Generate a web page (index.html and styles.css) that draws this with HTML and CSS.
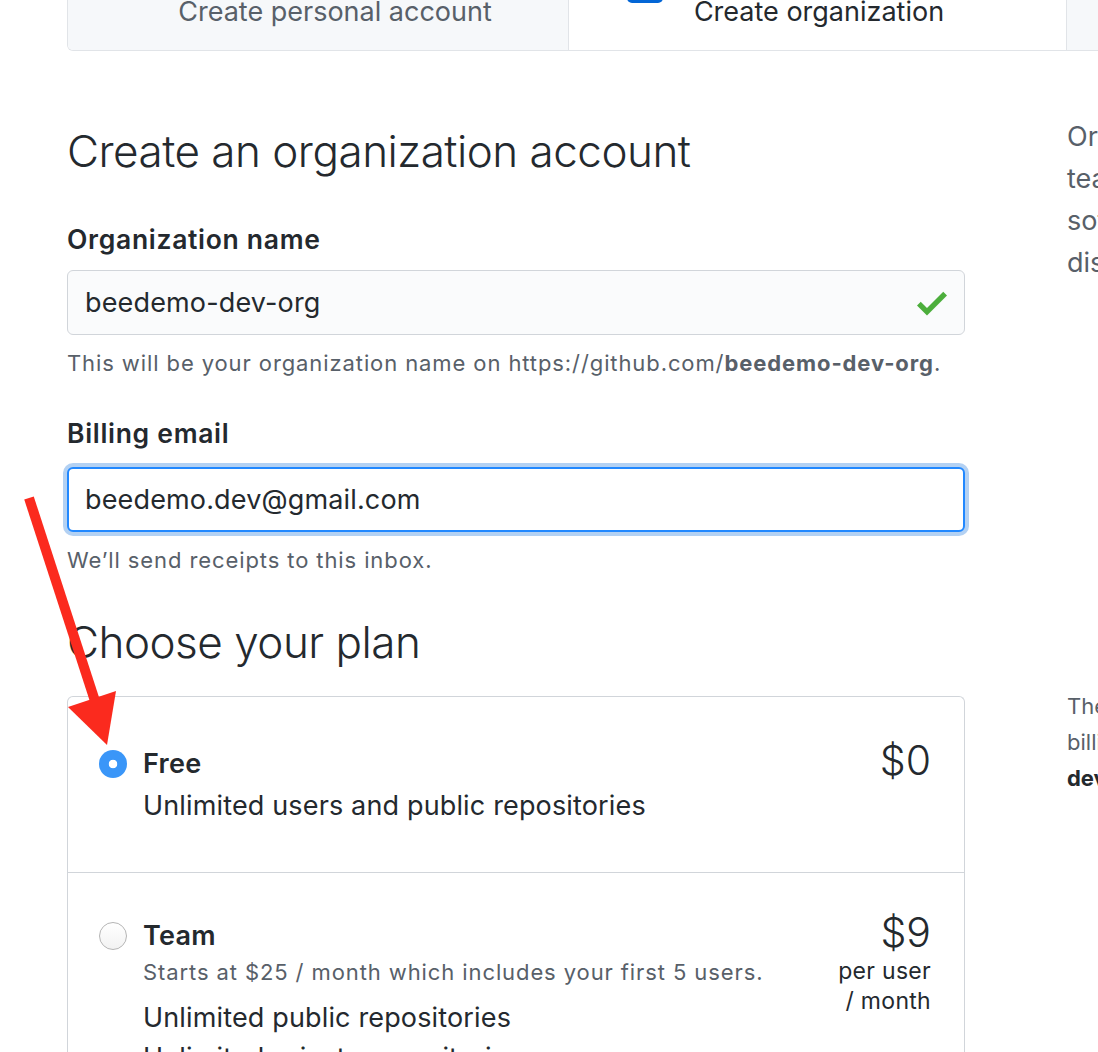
FILE: index.html
```html
<!DOCTYPE html>
<html lang="en">
<head>
<meta charset="utf-8">
<title>Create an organization account</title>
<link rel="stylesheet" href="styles.css">
</head>
<body>
<div class="page">
  <nav class="steps">
    <div class="step step-first">Create personal account</div>
    <div class="step step-active"><span class="step-label"><span class="step-badge"></span>Create organization</span></div>
    <div class="step step-last">Invite members</div>
  </nav>

  <div class="layout">
    <main class="main">
      <h1 class="title">Create an organization account</h1>

      <div class="field">
        <label class="label">Organization name</label>
        <div class="input input-ok">
          <span class="input-value">beedemo-dev-org</span>
          <svg class="check" viewBox="0 0 12 16" width="30" height="40" aria-hidden="true"><path d="M12 5l-8 8-4-4 1.5-1.5L4 10l6.5-6.5L12 5z"/></svg>
        </div>
        <p class="note">This will be your organization name on https://github.com/<strong>beedemo-dev-org</strong>.</p>
      </div>

      <div class="field">
        <label class="label">Billing email</label>
        <div class="input input-focus"><span class="input-value">beedemo.dev@gmail.com</span></div>
        <p class="note">We’ll send receipts to this inbox.</p>
      </div>

      <h2 class="title title-plan">Choose your plan</h2>

      <div class="plans">
        <div class="plan plan-free">
          <span class="radio radio-on"></span>
          <div class="plan-body">
            <div class="plan-name">Free</div>
            <div class="plan-desc">Unlimited users and public repositories</div>
          </div>
          <div class="plan-price"><div class="price">$0</div></div>
        </div>
        <div class="plan plan-team">
          <span class="radio"></span>
          <div class="plan-body">
            <div class="plan-name">Team</div>
            <div class="plan-sub">Starts at $25 / month which includes your first 5 users.</div>
            <div class="plan-desc plan-desc-list">Unlimited public repositories</div>
            <div class="plan-desc plan-desc-list2">Unlimited private repositories</div>
          </div>
          <div class="plan-price">
            <div class="price">$9</div>
            <div class="price-unit">per user<br>/ month</div>
          </div>
        </div>
      </div>
    </main>

    <aside class="side">
      <p class="side-intro"><span>Organizations are shared accounts where</span><span>teams can collaborate across many projects</span><span>software development tools and</span><span>discussions in one place.</span></p>
      <p class="side-billing"><span>The plan you choose can be changed later,</span><span>billing receipts will go to beedemo.</span><strong>dev@gmail.com</strong></p>
    </aside>
  </div>

  <svg class="arrow" width="140" height="260" viewBox="0 0 140 260" aria-hidden="true">
    <line x1="29" y1="2" x2="95" y2="205" stroke="#fb2a1e" stroke-width="10"/>
    <polygon points="68,211 116,195 107,249" fill="#fb2a1e"/>
  </svg>
</div>
</body>
</html>
```

FILE: styles.css
```css
* { box-sizing: border-box; }

html, body {
  margin: 0;
  padding: 0;
  background: #fff;
}

body {
  font-family: Inter, "Liberation Sans", Arial, sans-serif;
  color: #24292e;
  overflow: hidden;
  width: 1098px;
  height: 1052px;
}

.page {
  position: relative;
  padding-left: 67px;
  padding-top: 1px;
}

/* step tabs */
.steps {
  display: flex;
  width: 1500px;
  height: 81px;
  margin-top: -31px;
  border: 1px solid #e1e4e8;
  border-top: 0;
  border-radius: 0 0 6px 6px;
  overflow: hidden;
}

.step {
  display: flex;
  justify-content: center;
  padding-top: 25px;
  font-size: 27px;
  line-height: 34px;
  color: #586069;
  background: #f6f8fa;
}

.step-first { width: 500px; padding-left: 34px; }
.step-active { width: 498px; padding-left: 3px; }
.step-last { flex: 1; }

.step + .step { border-left: 1px solid #e1e4e8; }

.step-active {
  background: #fff;
  color: #24292e;
}

.step-label { position: relative; }

.step-badge {
  position: absolute;
  left: -67px;
  top: -22px;
  width: 36px;
  height: 30px;
  border-radius: 5px;
  background: #0366d6;
}

/* layout */
.layout {
  display: flex;
  gap: 102px;
  margin-top: 70px;
}

.main {
  width: 898px;
  flex: none;
}

.title {
  margin: 0;
  font-size: 44px;
  line-height: 60px;
  font-weight: 300;
  letter-spacing: -0.5px;
  color: #24292e;
}

.field { margin-top: 41px; }
.field + .field { margin-top: 37px; }

.label {
  display: block;
  font-size: 26.5px;
  line-height: 34px;
  font-weight: 600;
  letter-spacing: 0.7px;
}

.input {
  display: flex;
  align-items: center;
  justify-content: space-between;
  height: 65px;
  margin-top: 14px;
  padding: 0 17px 0 17px;
  border: 1px solid #d1d5da;
  border-radius: 6px;
  background: #fafbfc;
  font-size: 27px;
  letter-spacing: 0.15px;
}

.input-focus {
  margin-top: 17px;
  border: 2px solid #2188ff;
  padding-left: 16px;
  background: #fff;
  box-shadow: 0 0 0 4px rgba(3, 102, 214, 0.3);
}

.check { fill: #4cae3c; }

.note {
  margin: 12px 0 0;
  font-size: 22px;
  line-height: 32px;
  letter-spacing: 0.9px;
  color: #586069;
}

.note strong { font-weight: 700; }

.title-plan { margin-top: 36px; }

/* plans */
.plans {
  margin-top: 24px;
  border: 1px solid #d1d5da;
  border-radius: 6px;
  border-bottom: 0;
}

.plan {
  display: flex;
  align-items: flex-start;
  padding: 0 33px 0 31px;
}

.plan-free {
  padding-top: 49px;
  padding-bottom: 42px;
  border-bottom: 1px solid #d1d5da;
}

.plan-team { padding-top: 45px; }

.radio {
  flex: none;
  width: 28px;
  height: 28px;
  margin-top: 4px;
  margin-right: 16px;
  border-radius: 50%;
  border: 1px solid #b5b5b5;
  background: linear-gradient(#fff, #f2f2f2);
}

.radio-on {
  border: 0;
  background: radial-gradient(circle, #fff 0 4px, #3a96f8 4.6px);
}

.plan-body { flex: 1; }

.plan-name {
  font-size: 27px;
  line-height: 36px;
  font-weight: 600;
  letter-spacing: 0.3px;
}

.plan-desc {
  font-size: 27px;
  line-height: 48px;
  letter-spacing: 0.15px;
}

.plan-sub {
  font-size: 22px;
  line-height: 36px;
  letter-spacing: 0.9px;
  color: #586069;
}

.plan-desc-list {
  margin-top: 8px;
  line-height: 40px;
}

.plan-desc-list2 { line-height: 40px; }

.plan-price { text-align: right; }

.price {
  font-size: 41px;
  line-height: 40px;
  font-weight: 300;
  margin-top: -6px;
}

.price-unit {
  margin-top: 4px;
  font-size: 23px;
  line-height: 30px;
  letter-spacing: 0.3px;
}

/* sidebar */
.side {
  flex: none;
  width: 500px;
}

.side span, .side strong { display: block; white-space: nowrap; }

.side-intro {
  margin: -5px 0 0;
  font-size: 27px;
  line-height: 42px;
  color: #586069;
}

.side-billing {
  margin: 404px 0 0;
  font-size: 22px;
  line-height: 36px;
  color: #586069;
}

.side-billing strong { color: #24292e; font-weight: 700; }

/* annotation arrow */
.arrow {
  position: absolute;
  left: 0;
  top: 496px;
}
```
